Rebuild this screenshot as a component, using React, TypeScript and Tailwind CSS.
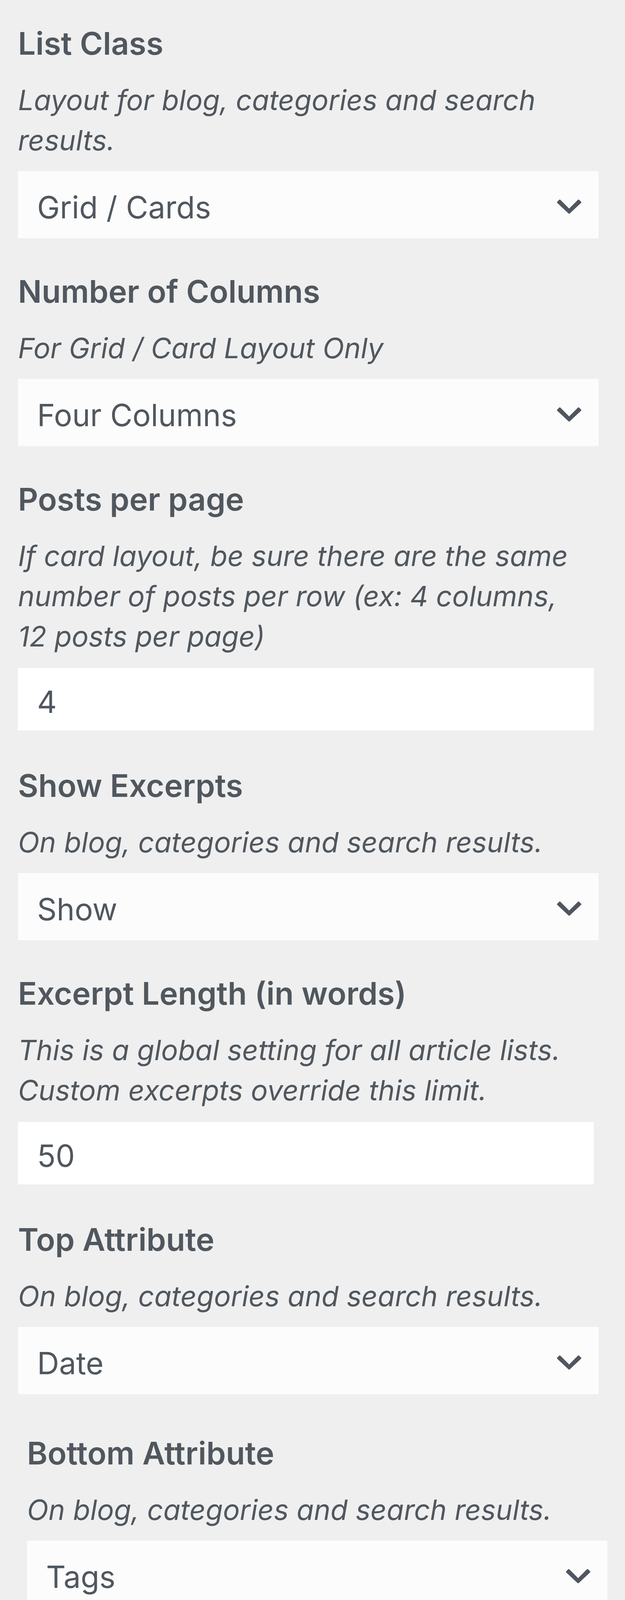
import React from "react";

type Control =
  | { kind: "select"; value: string }
  | { kind: "input"; value: string }
  | { kind: "file" };

type Field = {
  title: string;
  desc: string[];
  control: Control;
};

const mainFields: Field[] = [
  {
    title: "List Class",
    desc: ["Layout for blog, categories and search", "results."],
    control: { kind: "select", value: "Grid / Cards" },
  },
  {
    title: "Number of Columns",
    desc: ["For Grid / Card Layout Only"],
    control: { kind: "select", value: "Four Columns" },
  },
  {
    title: "Posts per page",
    desc: [
      "If card layout, be sure there are the same",
      "number of posts per row (ex: 4 columns,",
      "12 posts per page)",
    ],
    control: { kind: "input", value: "4" },
  },
  {
    title: "Show Excerpts",
    desc: ["On blog, categories and search results."],
    control: { kind: "select", value: "Show" },
  },
  {
    title: "Excerpt Length (in words)",
    desc: [
      "This is a global setting for all article lists.",
      "Custom excerpts override this limit.",
    ],
    control: { kind: "input", value: "50" },
  },
  {
    title: "Top Attribute",
    desc: ["On blog, categories and search results."],
    control: { kind: "select", value: "Date" },
  },
];

const extraFields: Field[] = [
  {
    title: "Bottom Attribute",
    desc: ["On blog, categories and search results."],
    control: { kind: "select", value: "Tags" },
  },
  {
    title: "Default Featured Image (optional)",
    desc: ["This is a global setting for all article lists."],
    control: { kind: "file" },
  },
];

const Chevron = () => (
  <svg width="62" height="36" viewBox="0 0 62 36" className="mt-[9px] shrink-0">
    <polygon
      points="0,7 7,0 31,24 55,0 62,7 31,36"
      fill="#4f5660"
      stroke="#4f5660"
      strokeWidth="1.5"
      strokeLinejoin="round"
    />
  </svg>
);

function FieldControl({ control }: { control: Control }) {
  if (control.kind === "select") {
    return (
      <div className="mt-[28px] flex h-[172px] w-[1486px] items-center justify-between bg-[#fcfcfd] pl-[49px] pr-[44px]">
        <span className="pt-[13px] text-[78px] leading-normal">{control.value}</span>
        <Chevron />
      </div>
    );
  }

  if (control.kind === "input") {
    return (
      <div className="mt-[30px] mb-[5px] flex h-[160px] w-[1474px] items-center bg-white pl-[49px]">
        <span className="pt-[12px] text-[78px] leading-normal">{control.value}</span>
      </div>
    );
  }

  // dashed drop zone for the image picker
  return (
    <div className="-ml-[5px] mt-[22px] flex h-[228px] w-[1485px] items-center justify-center border-[5px] border-dashed border-[#a4a7ab] bg-[#f0f0f2]">
      <span className="text-[76px] leading-normal text-[#4a5058]">Select file</span>
    </div>
  );
}

function SettingField({ field }: { field: Field }) {
  return (
    <div className="flex flex-col">
      <h3 className="text-[80px] leading-[100px] font-semibold whitespace-nowrap">
        {field.title}
      </h3>
      <p className="mt-[43px] text-[72px] leading-[103px] italic">
        {field.desc.map((line) => (
          <span key={line} className="block whitespace-nowrap">
            {line}
          </span>
        ))}
      </p>
      <FieldControl control={field.control} />
    </div>
  );
}

export default function App() {
  return (
    <div
      className="h-[4766px] w-full overflow-hidden bg-[#efefef] pt-[61px] text-[#50575e]"
      style={{ fontFamily: "Inter, 'Noto Sans', 'Liberation Sans', sans-serif" }}
    >
      <div className="flex flex-col gap-[86px] pl-[46px]">
        {mainFields.map((field) => (
          <SettingField key={field.title} field={field} />
        ))}
      </div>

      <div className="mt-[101px] flex flex-col gap-[86px] pl-[69px]">
        {extraFields.map((field) => (
          <SettingField key={field.title} field={field} />
        ))}
      </div>
    </div>
  );
}
